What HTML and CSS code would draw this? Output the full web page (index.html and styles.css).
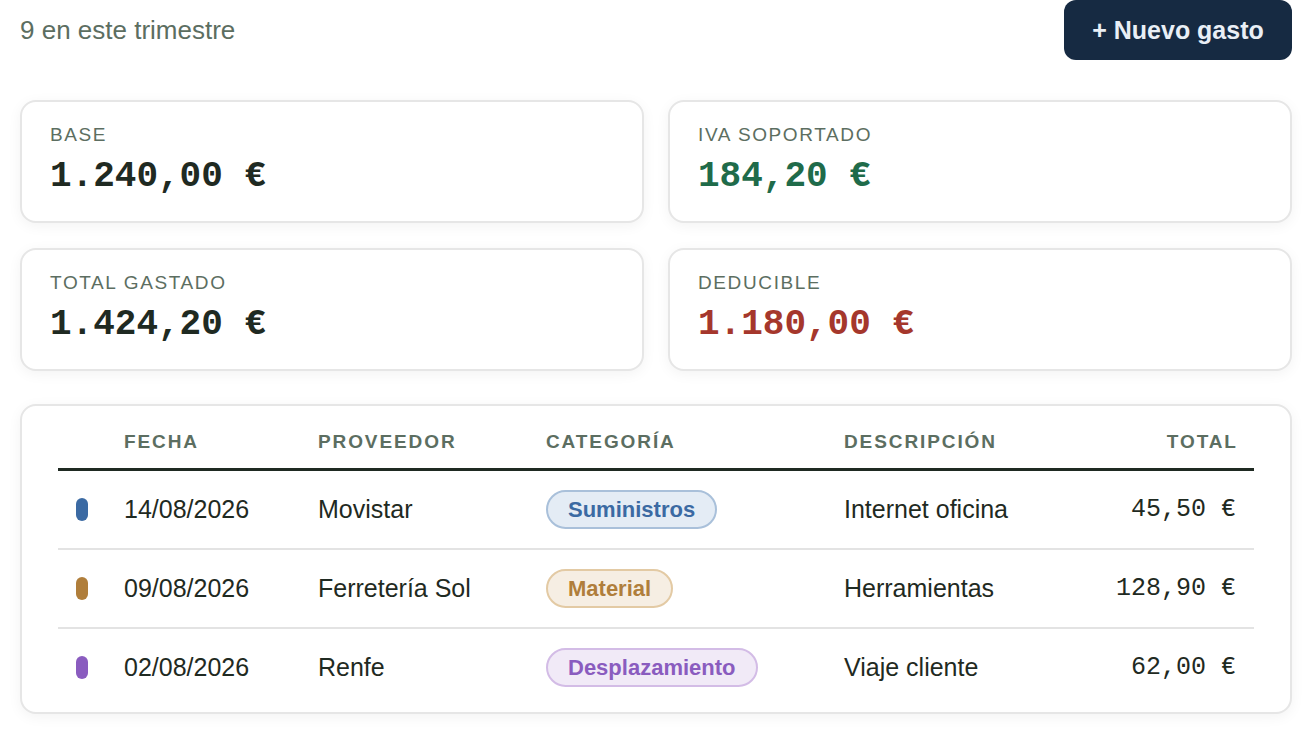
FILE: index.html
```html
<!DOCTYPE html>
<html lang="es">
<head>
<meta charset="utf-8">
<title>Gastos</title>
<link rel="stylesheet" href="styles.css">
</head>
<body>
<div class="page">
  <header class="top">
    <span class="count">9 en este trimestre</span>
    <button class="btn-new">+ Nuevo gasto</button>
  </header>

  <section class="stats">
    <div class="stat">
      <div class="stat-label">BASE</div>
      <div class="stat-value">1.240,00 €</div>
    </div>
    <div class="stat">
      <div class="stat-label">IVA SOPORTADO</div>
      <div class="stat-value green">184,20 €</div>
    </div>
    <div class="stat">
      <div class="stat-label">TOTAL GASTADO</div>
      <div class="stat-value">1.424,20 €</div>
    </div>
    <div class="stat">
      <div class="stat-label">DEDUCIBLE</div>
      <div class="stat-value red">1.180,00 €</div>
    </div>
  </section>

  <section class="table-card">
    <div class="row head">
      <div class="cell"></div>
      <div class="cell">FECHA</div>
      <div class="cell">PROVEEDOR</div>
      <div class="cell">CATEGORÍA</div>
      <div class="cell">DESCRIPCIÓN</div>
      <div class="cell num">TOTAL</div>
    </div>
    <div class="row">
      <div class="cell"><span class="dot blue"></span></div>
      <div class="cell">14/08/2026</div>
      <div class="cell">Movistar</div>
      <div class="cell"><span class="badge blue">Suministros</span></div>
      <div class="cell">Internet oficina</div>
      <div class="cell num mono">45,50 €</div>
    </div>
    <div class="row">
      <div class="cell"><span class="dot tan"></span></div>
      <div class="cell">09/08/2026</div>
      <div class="cell">Ferretería Sol</div>
      <div class="cell"><span class="badge tan">Material</span></div>
      <div class="cell">Herramientas</div>
      <div class="cell num mono">128,90 €</div>
    </div>
    <div class="row">
      <div class="cell"><span class="dot purple"></span></div>
      <div class="cell">02/08/2026</div>
      <div class="cell">Renfe</div>
      <div class="cell"><span class="badge purple">Desplazamiento</span></div>
      <div class="cell">Viaje cliente</div>
      <div class="cell num mono">62,00 €</div>
    </div>
  </section>
</div>
</body>
</html>
```

FILE: styles.css
```css
* { box-sizing: border-box; }

html, body {
  margin: 0;
  padding: 0;
  background: #ffffff;
}

body {
  font-family: "Liberation Sans", Arial, sans-serif;
  color: #1f2a22;
}

.page {
  padding: 0 20px 20px;
}

.top {
  height: 60px;
  display: flex;
  align-items: center;
  justify-content: space-between;
  margin-bottom: 40px;
}

.count {
  font-size: 26px;
  color: #5c6e61;
}

.btn-new {
  height: 60px;
  width: 228px;
  border: none;
  border-radius: 12px;
  background: #162a42;
  color: #e9eff6;
  font-family: "Liberation Sans", Arial, sans-serif;
  font-weight: 700;
  font-size: 25px;
  padding: 0;
}

.stats {
  display: grid;
  grid-template-columns: 1fr 1fr;
  column-gap: 24px;
  row-gap: 25px;
  margin-bottom: 33px;
}

.stat {
  height: 123px;
  border: 2px solid #e6e6e6;
  border-radius: 16px;
  background: #fff;
  box-shadow: 0 3px 14px rgba(0, 0, 0, 0.05);
  padding: 22px 28px 0;
}

.stat-label {
  font-size: 19px;
  line-height: 22px;
  letter-spacing: 0.085em;
  color: #5c6e61;
}

.stat-value {
  margin-top: 10px;
  font-family: "Liberation Mono", "Courier New", monospace;
  font-weight: 700;
  font-size: 36px;
  line-height: 42px;
  color: #1f2a22;
}

.stat-value.green { color: #1f6b4a; }
.stat-value.red { color: #a5372c; }

.table-card {
  border: 2px solid #e6e6e6;
  border-radius: 16px;
  background: #fff;
  box-shadow: 0 3px 14px rgba(0, 0, 0, 0.05);
  padding: 10px 36px 6px;
}

.row {
  display: grid;
  grid-template-columns: 48px 194px 228px 298px 1fr 160px;
  align-items: center;
  height: 79px;
  border-bottom: 2px solid #e3e3e3;
  font-size: 25px;
}

.row:last-child {
  border-bottom: none;
  height: 77px;
}

.row.head {
  height: 55px;
  border-bottom: 3px solid #1f2a22;
  font-size: 19px;
  font-weight: 700;
  letter-spacing: 0.1em;
  color: #5c6e61;
  padding-bottom: 1px;
}

.cell {
  padding: 0 18px;
  white-space: nowrap;
}

.num { text-align: right; }

.row.head .num { margin-right: -0.1em; }

.mono {
  font-family: "Liberation Mono", "Courier New", monospace;
  font-size: 25px;
}

.dot {
  display: block;
  width: 12px;
  height: 23px;
  border-radius: 6px;
}

.dot.blue { background: #3b6aa3; }
.dot.tan { background: #b07e3b; }
.dot.purple { background: #8a5cbf; }

.badge {
  display: inline-block;
  height: 39px;
  line-height: 35px;
  padding: 0 20px;
  border: 2px solid;
  border-radius: 20px;
  font-size: 22px;
  font-weight: 700;
  vertical-align: middle;
}

.badge.blue { background: #e4ecf5; border-color: #a9c0da; color: #3b6aa3; }
.badge.tan { background: #f6eee3; border-color: #e3caa4; color: #b07e3b; }
.badge.purple { background: #f1eaf7; border-color: #d3bce6; color: #8a5cbf; }
```
